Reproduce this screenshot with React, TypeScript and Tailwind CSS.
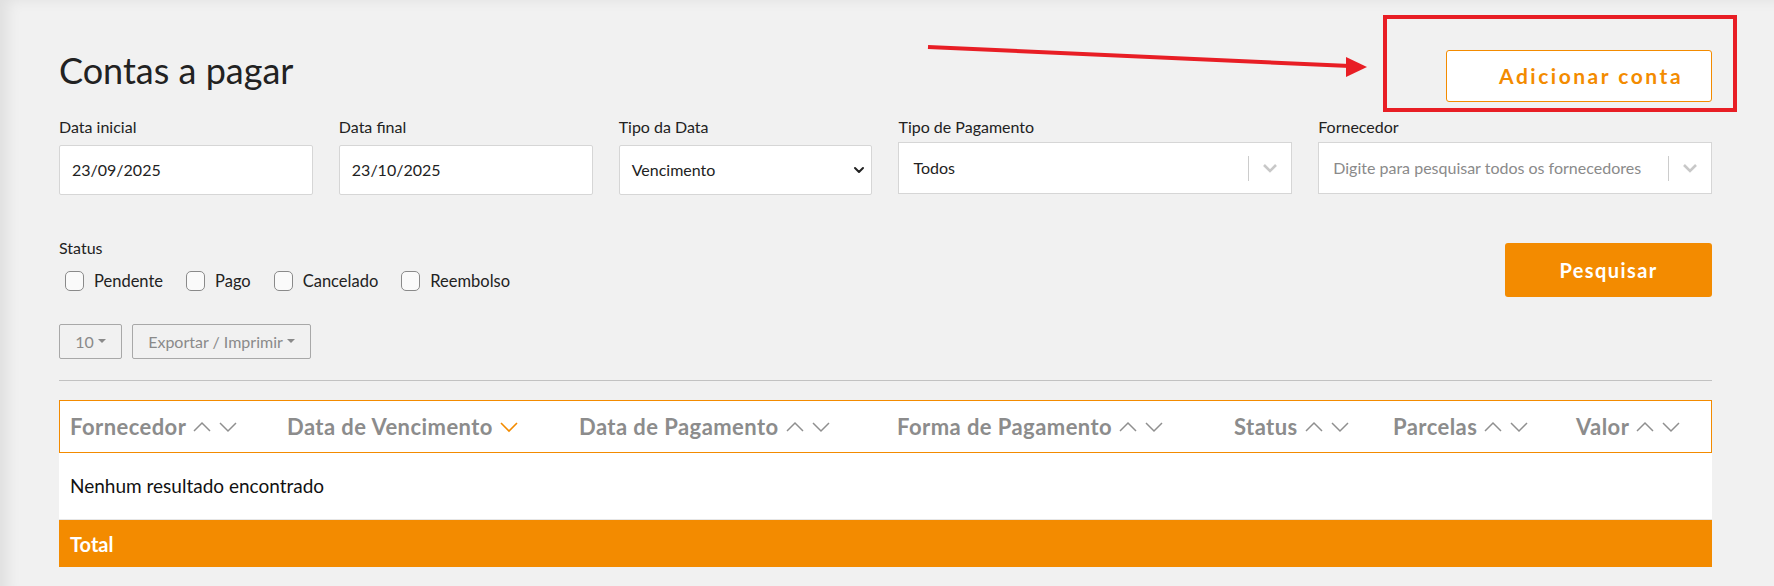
import { ChevronDown } from "lucide-react";

const font = { fontFamily: "Lato, 'Open Sans', sans-serif" };

// Thin sort chevrons used in the table header
function SortIcons({ active }: { active?: boolean }) {
  if (active) {
    return (
      <svg width="20" height="12" viewBox="0 0 20 12" className="ml-[6px] shrink-0">
        <path d="M2 2 L10 10 L18 2" fill="none" stroke="#f38b00" strokeWidth="1.6" />
      </svg>
    );
  }
  return (
    <span className="ml-[6px] flex shrink-0 items-center gap-[6px]">
      <svg width="20" height="12" viewBox="0 0 20 12">
        <path d="M2 10 L10 2 L18 10" fill="none" stroke="#8f8f8f" strokeWidth="1.5" />
      </svg>
      <svg width="20" height="12" viewBox="0 0 20 12">
        <path d="M2 2 L10 10 L18 2" fill="none" stroke="#8f8f8f" strokeWidth="1.5" />
      </svg>
    </span>
  );
}

function Caret() {
  return (
    <svg width="8" height="5" viewBox="0 0 8 5" className="ml-[4px]">
      <path d="M0 0 L8 0 L4 4 Z" fill="#8a8a8a" />
    </svg>
  );
}

function ReactSelect({ value, placeholder }: { value?: string; placeholder?: string }) {
  return (
    <div className="flex h-[52px] items-center border border-[#d6d6d6] bg-white pl-[14px]">
      <span className={`flex-1 truncate text-[16px] ${value ? "text-[#222]" : "text-[#8a8a8a]"}`}>
        {value ?? placeholder}
      </span>
      <span className="h-[25px] w-px bg-[#cccccc]" />
      <span className="flex w-[42px] items-center justify-center">
        <svg width="16" height="10" viewBox="0 0 16 10">
          <path d="M2 2 L8 8 L14 2" fill="none" stroke="#c8c8c8" strokeWidth="2.6" />
        </svg>
      </span>
    </div>
  );
}

const headers = [
  { label: "Fornecedor" },
  { label: "Data de Vencimento", active: true },
  { label: "Data de Pagamento" },
  { label: "Forma de Pagamento" },
  { label: "Status" },
  { label: "Parcelas" },
  { label: "Valor" },
];

export default function App() {
  return (
    <div
      className="relative h-[586px] w-full overflow-hidden bg-[#f1f1f1] shadow-[inset_14px_6px_14px_-6px_rgba(0,0,0,0.07)]"
      style={font}
    >
      <div className="pl-[59px] pr-[62px]">
        {/* title row */}
        <div className="flex items-center justify-between pt-[50px]">
          <h1 className="mb-[12px] text-[36px] leading-none text-[#222]">Contas a pagar</h1>
          <button className="h-[52px] w-[266px] rounded-[3px] border border-[#f38b00] bg-white pl-[52px] text-left text-[21px] font-bold tracking-[0.12em] text-[#f38b00]">
            Adicionar conta
          </button>
        </div>

        {/* filters */}
        <div className="mt-[15px] grid grid-cols-12 gap-x-[26px] text-[#222]">
          <div className="col-span-2">
            <label className="mb-[8px] block text-[16px] leading-[20px]">Data inicial</label>
            <div className="flex h-[50px] items-center rounded-[2px] border border-[#d6d6d6] bg-white px-[12px] text-[16px]">
              23/09/2025
            </div>
          </div>
          <div className="col-span-2">
            <label className="mb-[8px] block text-[16px] leading-[20px]">Data final</label>
            <div className="flex h-[50px] items-center rounded-[2px] border border-[#d6d6d6] bg-white px-[12px] text-[16px]">
              23/10/2025
            </div>
          </div>
          <div className="col-span-2">
            <label className="mb-[8px] block text-[16px] leading-[20px]">Tipo da Data</label>
            <div className="flex h-[50px] items-center justify-between rounded-[2px] border border-[#d6d6d6] bg-white pl-[12px] pr-[4px] text-[16px]">
              Vencimento
              <ChevronDown size={16} strokeWidth={3} className="text-[#222]" />
            </div>
          </div>
          <div className="col-span-3">
            <label className="mb-[5px] block text-[16px] leading-[20px]">Tipo de Pagamento</label>
            <ReactSelect value="Todos" />
          </div>
          <div className="col-span-3">
            <label className="mb-[5px] block text-[16px] leading-[20px]">Fornecedor</label>
            <ReactSelect placeholder="Digite para pesquisar todos os fornecedores" />
          </div>
        </div>

        {/* status + search */}
        <div className="mt-[43px] flex items-start justify-between">
          <div>
            <div className="text-[16px] leading-[20px] text-[#222]">Status</div>
            <div className="ml-[6px] mt-[11px] flex items-center gap-[23px]">
              {["Pendente", "Pago", "Cancelado", "Reembolso"].map((s) => (
                <label key={s} className="flex items-center gap-[10px] text-[16.5px] text-[#222]">
                  <span className="h-[20px] w-[19px] rounded-[5px] border border-[#8a8a8a] bg-[#fafafa]" />
                  {s}
                </label>
              ))}
            </div>
          </div>
          <button className="mt-[5px] h-[54px] w-[207px] rounded-[3px] bg-[#f38b00] text-[20px] font-bold tracking-[0.07em] text-white">
            Pesquisar
          </button>
        </div>

        {/* toolbar */}
        <div className="mt-[27px] flex gap-[10px] text-[16px] text-[#8a8a8a]">
          <button className="flex h-[35px] w-[63px] items-center justify-center rounded-[2px] border border-[#a8a8a8]">
            10
            <Caret />
          </button>
          <button className="flex h-[35px] w-[179px] items-center justify-center rounded-[2px] border border-[#a8a8a8]">
            Exportar / Imprimir
            <Caret />
          </button>
        </div>

        <div className="mt-[21px] h-px bg-[#c2c2c2]" />

        {/* table */}
        <div className="mt-[19px]">
          <div className="grid h-[53px] grid-cols-[217px_292px_318px_337px_159px_183px_1fr] items-center border border-[#f38b00] bg-white pl-[10px]">
            {headers.map((h) => (
              <div key={h.label} className="flex items-center whitespace-nowrap text-[22px] font-bold tracking-[0.02em] text-[#8c8c8c]">
                {h.label}
                <SortIcons active={h.active} />
              </div>
            ))}
          </div>
          <div className="flex h-[67px] items-center border-b border-[#e6e6e6] bg-white pl-[11px] text-[19px] text-[#111]">
            Nenhum resultado encontrado
          </div>
          <div className="flex h-[47px] items-center bg-[#f38b00] pl-[11px] text-[20px] font-bold text-white">
            Total
          </div>
        </div>
      </div>

      {/* annotation overlay */}
      <div className="pointer-events-none absolute left-[1383px] top-[15px] h-[97px] w-[354px] border-[4px] border-[#e81e25]" />
      <svg className="pointer-events-none absolute left-0 top-0" width="1774" height="586">
        <line x1="928" y1="47" x2="1350" y2="66" stroke="#e81e25" strokeWidth="4" />
        <polygon points="1346,57 1367,67 1346,77" fill="#e81e25" />
      </svg>
    </div>
  );
}
